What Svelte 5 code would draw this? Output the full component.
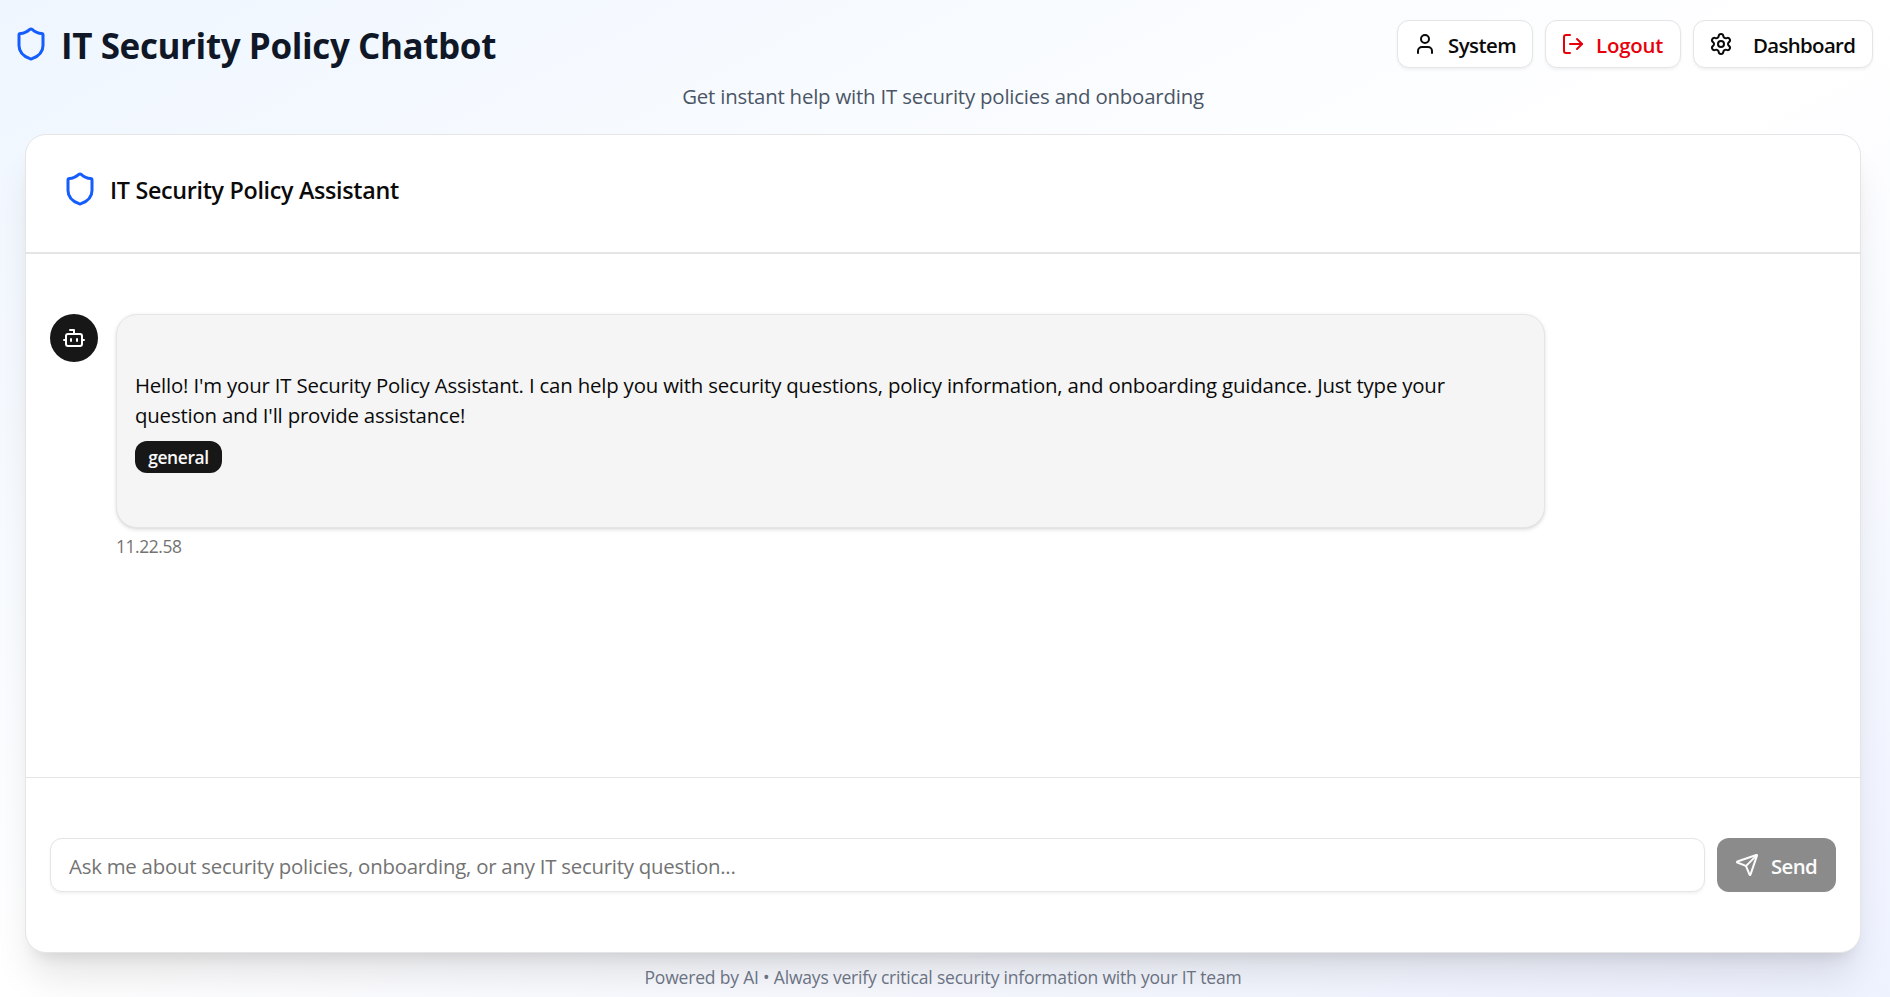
<script>
  const actions = [
    { label: 'System', icon: 'user', kind: 'system' },
    { label: 'Logout', icon: 'logout', kind: 'logout' },
    { label: 'Dashboard', icon: 'settings', kind: 'dashboard' }
  ];
  const message = {
    text: "Hello! I'm your IT Security Policy Assistant. I can help you with security questions, policy information, and onboarding guidance. Just type your question and I'll provide assistance!",
    category: 'general',
    time: '11.22.58'
  };
  const paths = {
    shield: ['M20 13c0 5-3.5 7.5-7.66 8.95a1 1 0 0 1-.67-.01C7.5 20.5 4 18 4 13V6a1 1 0 0 1 1-1c2 0 4.5-1.2 6.24-2.72a1.17 1.17 0 0 1 1.52 0C14.51 3.81 17 5 19 5a1 1 0 0 1 1 1z'],
    user: ['M19 21v-2a4 4 0 0 0-4-4H9a4 4 0 0 0-4 4v2', 'M16 7a4 4 0 1 1-8 0 4 4 0 0 1 8 0z'],
    logout: ['m16 17 5-5-5-5', 'M21 12H9', 'M9 21H5a2 2 0 0 1-2-2V5a2 2 0 0 1 2-2h4'],
    settings: ['M9.671 4.136a2.34 2.34 0 0 1 4.659 0 2.34 2.34 0 0 0 3.319 1.915 2.34 2.34 0 0 1 2.33 4.033 2.34 2.34 0 0 0 0 3.831 2.34 2.34 0 0 1-2.33 4.033 2.34 2.34 0 0 0-3.319 1.915 2.34 2.34 0 0 1-4.659 0 2.34 2.34 0 0 0-3.32-1.915 2.34 2.34 0 0 1-2.33-4.033 2.34 2.34 0 0 0 0-3.831A2.34 2.34 0 0 1 6.35 6.051a2.34 2.34 0 0 0 3.319-1.915', 'M15 12a3 3 0 1 1-6 0 3 3 0 0 1 6 0z'],
    bot: ['M12 8V4H8', 'M6 8h12a2 2 0 0 1 2 2v8a2 2 0 0 1-2 2H6a2 2 0 0 1-2-2v-8a2 2 0 0 1 2-2z', 'M2 14h2', 'M20 14h2', 'M15 13v2', 'M9 13v2'],
    send: ['M14.536 21.686a.5.5 0 0 0 .937-.024l6.5-19a.496.496 0 0 0-.635-.635l-19 6.5a.5.5 0 0 0-.024.937l7.93 3.18a2 2 0 0 1 1.112 1.11z', 'm21.854 2.147-10.94 10.939']
  };
</script>

{#snippet icon(name, size)}
  <svg width={size} height={size} viewBox="0 0 24 24" fill="none" stroke="currentColor" stroke-width="2" stroke-linecap="round" stroke-linejoin="round" aria-hidden="true">
    {#each paths[name] as d}<path {d} />{/each}
  </svg>
{/snippet}

<div class="page">
  <header>
    <div class="brand">
      {@render icon('shield', 36)}
      <h1>IT Security Policy Chatbot</h1>
    </div>
    <nav>
      {#each actions as a}
        <button class="action {a.kind}">{@render icon(a.icon, 24)}<span>{a.label}</span></button>
      {/each}
    </nav>
  </header>
  <p class="subtitle">Get instant help with IT security policies and onboarding</p>

  <main class="card">
    <div class="card-head">
      {@render icon('shield', 36)}
      <h2>IT Security Policy Assistant</h2>
    </div>
    <section class="chat">
      <div class="avatar">{@render icon('bot', 24)}</div>
      <div class="message">
        <div class="bubble">
          <p>{message.text}</p>
          <span class="badge">{message.category}</span>
        </div>
        <time>{message.time}</time>
      </div>
    </section>
    <form class="composer">
      <input placeholder="Ask me about security policies, onboarding, or any IT security question..." />
      <button class="send" type="button">{@render icon('send', 24)}<span>Send</span></button>
    </form>
  </main>

  <footer>Powered by AI • Always verify critical security information with your IT team</footer>
</div>

<style>
  :global(body) { margin: 0; overflow: hidden; }
  * { box-sizing: border-box; }
  .page {
    height: 997px;
    display: flex;
    flex-direction: column;
    padding: 20px 17px 0 13px;
    background: linear-gradient(to bottom right, #eff6ff, #ffffff, #eef2ff);
    font-family: 'Open Sans', 'Noto Sans', sans-serif;
    font-size: 20.4px;
    color: #0a0a0a;
    overflow: hidden;
  }
  svg { display: block; flex: none; }
  h1, h2, p { margin: 0; }
  header { display: flex; justify-content: space-between; height: 48px; }
  .brand { display: flex; gap: 12px; color: #155dfc; }
  .brand svg { margin-top: 6px; }
  h1 {
    font-size: 35px;
    font-weight: 700;
    line-height: 52px;
    letter-spacing: -0.4px;
    color: #101828;
  }
  nav { display: flex; gap: 12px; }
  button { font: inherit; color: inherit; }
  .action {
    display: flex;
    align-items: center;
    height: 48px;
    padding: 0 15px;
    border: 1px solid #e5e5e5;
    border-radius: 12px;
    background: #fff;
    box-shadow: 0 1.5px 3px rgb(0 0 0 / 0.05);
    font-weight: 600;
    letter-spacing: -0.5px;
    white-space: nowrap;
  }
  .action span { position: relative; top: 1px; }
  .system { width: 136px; gap: 11px; }
  .logout { width: 136px; gap: 11px; color: #e7000b; letter-spacing: -0.2px; }
  .dashboard { width: 180px; gap: 20px; letter-spacing: -0.65px; }
  .subtitle {
    margin: 13px 0 0;
    height: 31px;
    line-height: 31px;
    text-align: center;
    letter-spacing: -0.2px;
    color: #4a5565;
  }
  .card {
    flex: none;
    margin: 22px 12px 0;
    height: 819px;
    display: flex;
    flex-direction: column;
    background: #fff;
    border: 1px solid #e5e5e5;
    border-radius: 21px;
    box-shadow: 0 30px 37.5px -7.5px rgb(0 0 0 / 0.1), 0 12px 15px -9px rgb(0 0 0 / 0.1);
  }
  .card-head {
    display: flex;
    gap: 12px;
    height: 119px;
    padding: 36px 36px 0;
    border-bottom: 2px solid #e5e5e5;
    color: #155dfc;
  }
  h2 {
    font-size: 23.3px;
    font-weight: 600;
    line-height: 38px;
    letter-spacing: -0.31px;
    color: #0a0a0a;
  }
  .chat {
    flex: 1;
    display: flex;
    gap: 18px;
    padding: 60px 24px 0;
  }
  .avatar {
    flex: none;
    width: 48px;
    height: 48px;
    border-radius: 50%;
    display: grid;
    place-items: center;
    background: #171717;
    color: #fff;
  }
  .message { width: 1429px; }
  .bubble {
    height: 214px;
    padding: 55px 18px 0;
    border: 1px solid #e5e5e5;
    border-radius: 21px;
    background: #f5f5f5;
    box-shadow: 0 1.5px 4.5px rgb(0 0 0 / 0.1), 0 1.5px 3px -1.5px rgb(0 0 0 / 0.1);
  }
  .bubble p { line-height: 30px; letter-spacing: -0.185px; width: 1370px; }
  .badge {
    display: flex;
    align-items: center;
    justify-content: center;
    margin-top: 11px;
    width: 87px;
    height: 32px;
    border-radius: 12px;
    background: #171717;
    color: #fafafa;
    font-size: 17.4px;
    font-weight: 650;
    letter-spacing: -0.35px;
  }
  time {
    display: block;
    margin-top: 6px;
    line-height: 24px;
    font-size: 17.4px;
    letter-spacing: -0.4px;
    color: #737373;
  }
  .composer {
    display: flex;
    gap: 12px;
    height: 175px;
    padding: 60px 24px 0;
    border-top: 1px solid #e5e5e5;
  }
  input {
    flex: 1;
    height: 54px;
    padding: 2px 18px 0;
    border: 1px solid #e5e5e5;
    border-radius: 12px;
    background: #fff;
    font: inherit;
    letter-spacing: -0.24px;
    box-shadow: 0 1.5px 3px rgb(0 0 0 / 0.05);
    outline: none;
  }
  input::placeholder { color: #737373; opacity: 1; }
  .send {
    display: flex;
    align-items: center;
    gap: 12px;
    width: 119px;
    height: 54px;
    padding: 0 18px;
    border: 0;
    border-radius: 12px;
    background: #8b8b8b;
    color: #fcfcfc;
    font-weight: 650;
    letter-spacing: -0.6px;
  }
  .send span { position: relative; top: 1px; }
  footer {
    margin: 12px 0 0;
    line-height: 24px;
    text-align: center;
    font-size: 17.5px;
    letter-spacing: -0.19px;
    color: #6a7282;
  }
</style>
